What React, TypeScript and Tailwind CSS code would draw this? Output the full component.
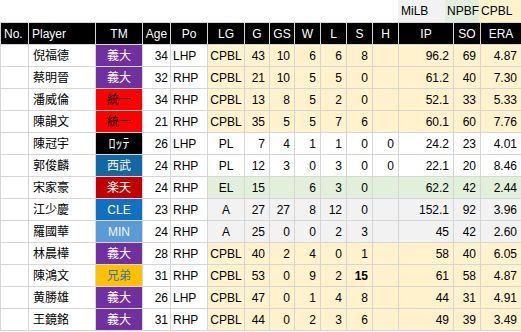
import React from 'react';

type Row = {
  name: string;
  tm: string;
  age: number;
  po: string;
  lg: string;
  g: string;
  gs: string;
  w: string;
  l: string;
  s: string;
  h: string;
  ip: string;
  so: string;
  era: string;
};

const rows: Row[] = [
  { name: '倪福德', tm: '義大', age: 34, po: 'LHP', lg: 'CPBL', g: '43', gs: '10', w: '6', l: '6', s: '8', h: '', ip: '96.2', so: '69', era: '4.87' },
  { name: '蔡明晉', tm: '義大', age: 32, po: 'RHP', lg: 'CPBL', g: '21', gs: '10', w: '5', l: '5', s: '0', h: '', ip: '61.2', so: '40', era: '7.30' },
  { name: '潘威倫', tm: '統一', age: 34, po: 'RHP', lg: 'CPBL', g: '13', gs: '8', w: '5', l: '2', s: '0', h: '', ip: '52.1', so: '33', era: '5.33' },
  { name: '陳韻文', tm: '統一', age: 21, po: 'RHP', lg: 'CPBL', g: '35', gs: '5', w: '5', l: '7', s: '6', h: '', ip: '60.1', so: '60', era: '7.76' },
  { name: '陳冠宇', tm: 'ﾛｯﾃ', age: 26, po: 'LHP', lg: 'PL', g: '7', gs: '4', w: '1', l: '1', s: '0', h: '0', ip: '24.2', so: '23', era: '4.01' },
  { name: '郭俊麟', tm: '西武', age: 24, po: 'RHP', lg: 'PL', g: '12', gs: '3', w: '0', l: '3', s: '0', h: '0', ip: '22.1', so: '20', era: '8.46' },
  { name: '宋家豪', tm: '楽天', age: 24, po: 'RHP', lg: 'EL', g: '15', gs: '', w: '6', l: '3', s: '0', h: '', ip: '62.2', so: '42', era: '2.44' },
  { name: '江少慶', tm: 'CLE', age: 23, po: 'RHP', lg: 'A', g: '27', gs: '27', w: '8', l: '12', s: '0', h: '', ip: '152.1', so: '92', era: '3.96' },
  { name: '羅國華', tm: 'MIN', age: 24, po: 'RHP', lg: 'A', g: '25', gs: '0', w: '0', l: '2', s: '3', h: '', ip: '45', so: '42', era: '2.60' },
  { name: '林晨樺', tm: '義大', age: 28, po: 'RHP', lg: 'CPBL', g: '40', gs: '2', w: '4', l: '0', s: '1', h: '', ip: '58', so: '40', era: '6.05' },
  { name: '陳鴻文', tm: '兄弟', age: 31, po: 'RHP', lg: 'CPBL', g: '53', gs: '0', w: '9', l: '2', s: '15', h: '', ip: '61', so: '58', era: '4.87' },
  { name: '黄勝雄', tm: '義大', age: 26, po: 'LHP', lg: 'CPBL', g: '47', gs: '0', w: '1', l: '4', s: '8', h: '', ip: '44', so: '31', era: '4.91' },
  { name: '王鏡銘', tm: '義大', age: 31, po: 'RHP', lg: 'CPBL', g: '44', gs: '0', w: '2', l: '3', s: '6', h: '', ip: '49', so: '39', era: '3.49' },
];

const teamStyle: Record<string, string> = {
  '義大': 'bg-[#7030a0] text-white',
  '統一': 'bg-[#ff0000] text-black',
  'ﾛｯﾃ': 'bg-black text-white text-[14px]',
  '西武': 'bg-[#1368a3] text-white',
  '楽天': 'bg-[#c00000] text-white',
  'CLE': 'bg-[#1170c4] text-white',
  'MIN': 'bg-[#5b9bd5] text-[#eef4fb]',
  '兄弟': 'bg-[#ffc000] text-[#2e75b6]',
};

const leagueBg: Record<string, string> = {
  CPBL: 'bg-[#fff2cc]',
  PL: 'bg-white',
  EL: 'bg-[#e2efda]',
  A: 'bg-[#f2f2f2]',
};

const widths = [28, 67, 47, 28, 37, 37, 25, 25, 26, 26, 26, 26, 55, 27, 41];
const heads = ['No.', 'Player', 'TM', 'Age', 'Po', 'LG', 'G', 'GS', 'W', 'L', 'S', 'H', 'IP', 'SO', 'ERA'];

const cell = 'border border-[#d6d6d6] p-0 h-[22px] whitespace-nowrap overflow-hidden';

export default function App() {
  return (
    <div
      className="w-[521px] h-[332px] bg-white text-[12px] text-black overflow-hidden"
      style={{ fontFamily: '"Liberation Sans", "Noto Sans CJK TC", sans-serif' }}
    >
      {/* league colour legend */}
      <div className="flex h-[22px] pl-[398px] items-center">
        <div className="w-[47px] h-full bg-[#f2f2f2] pl-[3px] flex items-center">MiLB</div>
        <div className="w-[34px] h-full bg-[#e2efda] flex items-center pl-[2px]">NPBF</div>
        <div className="w-[42px] h-full bg-[#fff2cc] flex items-center pl-[2px]">CPBL</div>
      </div>
      <table className="table-fixed border-collapse w-[521px]">
        <colgroup>
          {widths.map((w, i) => (
            <col key={i} style={{ width: w }} />
          ))}
        </colgroup>
        <thead>
          <tr className="bg-black text-white">
            {heads.map((h, i) => (
              <th
                key={h}
                className={`${cell} border-[#8a8a8a] font-normal ${i < 2 ? 'text-left pl-[3px]' : 'text-center'}`}
              >
                {h}
              </th>
            ))}
          </tr>
        </thead>
        <tbody>
          {rows.map((r) => {
            const bg = leagueBg[r.lg];
            const num = `${cell} ${bg} text-right pr-[4px]`;
            return (
              <tr key={r.name}>
                <td className={`${cell} bg-white`}></td>
                <td className={`${cell} bg-white pl-[4px]`}>{r.name}</td>
                <td className={`${cell} text-center ${teamStyle[r.tm]}`}>{r.tm}</td>
                <td className={`${cell} bg-white text-right pr-[2px]`}>{r.age}</td>
                <td className={`${cell} bg-white pl-[2px]`}>{r.po}</td>
                <td className={`${cell} ${bg} text-center`}>{r.lg}</td>
                <td className={num}>{r.g}</td>
                <td className={num}>{r.gs}</td>
                <td className={num}>{r.w}</td>
                <td className={num}>{r.l}</td>
                <td className={`${num} ${r.s === '15' ? 'font-bold' : ''}`}>{r.s}</td>
                <td className={num}>{r.h}</td>
                <td className={num}>{r.ip}</td>
                <td className={num}>{r.so}</td>
                <td className={num}>{r.era}</td>
              </tr>
            );
          })}
        </tbody>
      </table>
    </div>
  );
}
